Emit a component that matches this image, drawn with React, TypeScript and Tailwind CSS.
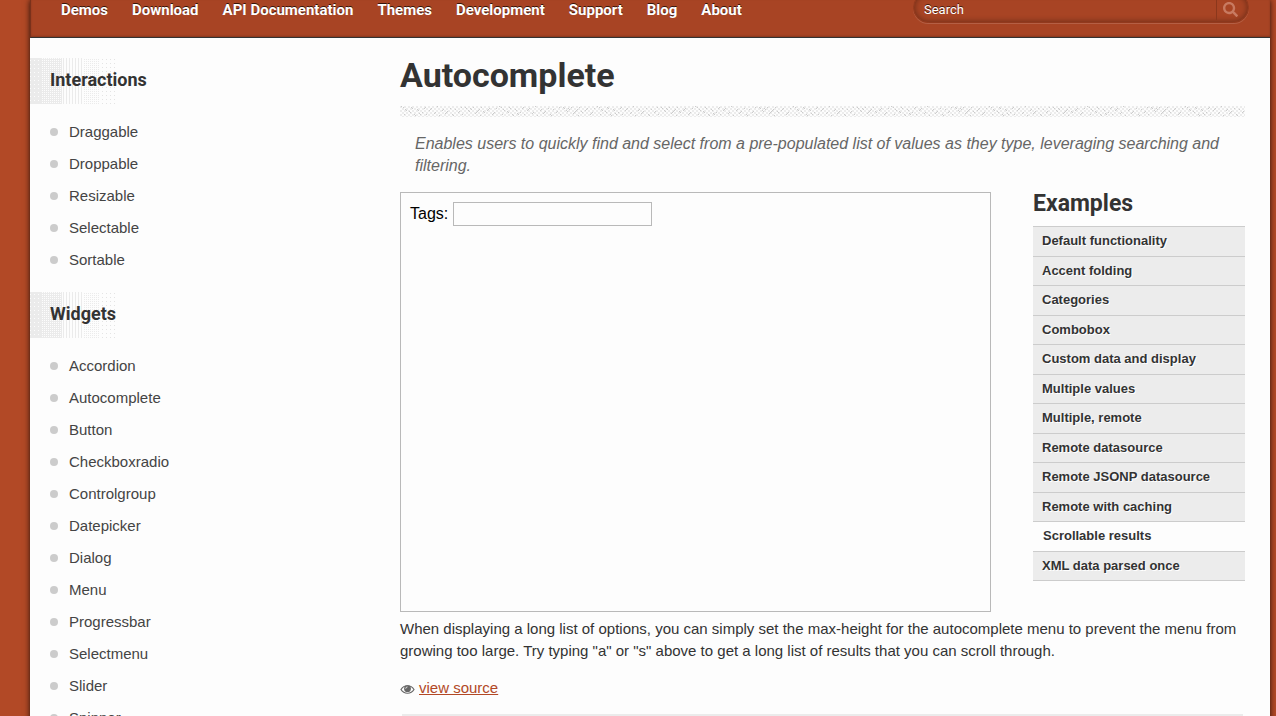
import { useState } from "react";
import { FaSearch } from "react-icons/fa";

const navLinks = ["Demos", "Download", "API Documentation", "Themes", "Development", "Support", "Blog", "About"];

const sections = [
  {
    title: "Interactions",
    items: ["Draggable", "Droppable", "Resizable", "Selectable", "Sortable"],
  },
  {
    title: "Widgets",
    items: [
      "Accordion",
      "Autocomplete",
      "Button",
      "Checkboxradio",
      "Controlgroup",
      "Datepicker",
      "Dialog",
      "Menu",
      "Progressbar",
      "Selectmenu",
      "Slider",
      "Spinner",
    ],
  },
];

const examples = [
  "Default functionality",
  "Accent folding",
  "Categories",
  "Combobox",
  "Custom data and display",
  "Multiple values",
  "Multiple, remote",
  "Remote datasource",
  "Remote JSONP datasource",
  "Remote with caching",
  "Scrollable results",
  "XML data parsed once",
];

function Header() {
  const [query, setQuery] = useState("");

  return (
    <header className="h-[38px] flex items-start justify-between overflow-hidden border-b border-l border-b-[#333] border-l-[#7a311b] bg-[#a84424] pl-[30px] pr-[21px] shadow-[inset_0_-1px_2px_rgba(0,0,0,0.2)]">
      <nav className="flex gap-6 whitespace-nowrap font-['Roboto',sans-serif] text-[15px] leading-5 font-bold text-white [text-shadow:0_-1px_0_rgba(0,0,0,0.7)]">
        {navLinks.map((link) => (
          <a key={link} href="#">
            {link}
          </a>
        ))}
      </nav>
      <form
        onSubmit={(e) => e.preventDefault()}
        className="-mt-2 flex h-[31px] w-[336px] items-center rounded-full border border-[#93391d] shadow-[inset_0_0_6px_rgba(0,0,0,0.4),0_1px_0_rgba(255,255,255,0.15)]"
      >
        <input
          type="text"
          aria-label="Search"
          placeholder="Search"
          value={query}
          onChange={(e) => setQuery(e.target.value)}
          className="h-full min-w-0 flex-1 bg-transparent pt-1 pl-[10px] font-['Roboto',sans-serif] text-[13px] text-white outline-none placeholder:text-white [text-shadow:0_-1px_0_rgba(0,0,0,0.6)]"
        />
        <button type="submit" aria-label="Submit search" className="flex h-6 w-8 items-center border-l border-[#8b371c] pl-[6px] text-[#c87a61]">
          <FaSearch className="mt-1 size-[15px]" />
        </button>
      </form>
    </header>
  );
}

function Sidebar() {
  return (
    <aside className="w-[370px] shrink-0 pt-5">
      {sections.map((section) => (
        <section key={section.title} className="mb-4">
          <h3 className="relative flex h-[46px] items-center pb-[2px] pl-5 font-['Roboto',sans-serif] text-lg font-bold text-[#333]">
            <Halftone />
            <span className="relative">{section.title}</span>
          </h3>
          <ul className="pt-3">
            {section.items.map((item) => (
              <li key={item} className="flex h-8 items-center gap-[11px] pl-5">
                <span className="size-2 rounded-full bg-[#ccc]" />
                <a href="#" className="text-[15px] leading-5 text-[#444]">
                  {item}
                </a>
              </li>
            ))}
          </ul>
        </section>
      ))}
    </aside>
  );
}

// dotted fade behind the sidebar headings
function Halftone() {
  return (
    <svg className="absolute top-0 left-0" width="87" height="46" shapeRendering="crispEdges" aria-hidden="true">
      <defs>
        <pattern id="holes-wide" width="4" height="4" patternUnits="userSpaceOnUse">
          <path d="M0 0h4v4h-4z" fill="#ebebeb" />
          <path d="M0 2h1v1h-1z" fill="#fdfdfd" />
        </pattern>
        <pattern id="holes" width="2" height="2" patternUnits="userSpaceOnUse">
          <path d="M0 0h2v2h-2z" fill="#ebebeb" />
          <path d="M0 0h1v1h-1z" fill="#fdfdfd" />
        </pattern>
        <pattern id="lines" width="3" height="2" patternUnits="userSpaceOnUse">
          <path d="M0 0h1v2h-1z" fill="#ebebeb" />
        </pattern>
        <pattern id="dots" width="2" height="2" patternUnits="userSpaceOnUse">
          <path d="M0 1h1v1h-1z" fill="#ebebeb" />
        </pattern>
        <pattern id="dots-wide" width="4" height="4" patternUnits="userSpaceOnUse">
          <path d="M0 1h1v1h-1z" fill="#e4e4e4" />
        </pattern>
      </defs>
      <rect width="12" height="46" fill="url(#holes-wide)" />
      <rect x="12" width="20" height="46" fill="url(#holes)" />
      <rect x="32" width="22" height="46" fill="url(#lines)" />
      <rect x="54" width="16" height="46" fill="url(#dots)" />
      <rect x="70" width="17" height="46" fill="url(#dots-wide)" />
    </svg>
  );
}

function NoiseBar() {
  return (
    <svg className="block w-full" height="11" shapeRendering="crispEdges" aria-hidden="true">
      <defs>
        <pattern id="checker" width="4" height="4" patternUnits="userSpaceOnUse">
          <path d="M0 0h2v2h-2zM2 2h2v2h-2z" fill="#ececec" />
        </pattern>
        <pattern id="specks" width="98" height="11" patternUnits="userSpaceOnUse">
          <path
            d="M1 0h1v1h-1zM3 1h1v1h-1zM5 3h1v1h-1zM6 4h1v1h-1zM4 8h1v1h-1zM9 5h1v1h-1zM10 6h1v1h-1zM12 2h1v1h-1zM11 1h1v1h-1zM14 8h1v1h-1zM15 9h1v1h-1zM17 3h1v1h-1zM18 4h1v1h-1zM19 7h1v1h-1zM20 8h1v1h-1zM22 6h1v1h-1zM25 1h1v1h-1zM24 2h1v1h-1zM26 8h1v1h-1zM29 4h1v1h-1zM30 3h1v1h-1zM31 2h1v1h-1zM34 7h1v1h-1zM35 6h1v1h-1zM37 0h1v1h-1zM39 9h1v1h-1zM42 4h1v1h-1zM43 3h1v1h-1zM45 7h1v1h-1zM46 6h1v1h-1zM47 5h1v1h-1zM50 2h1v1h-1zM52 8h1v1h-1zM53 9h1v1h-1zM55 3h1v1h-1zM58 6h1v1h-1zM59 5h1v1h-1zM61 1h1v1h-1zM62 8h1v1h-1zM65 1h1v1h-1zM66 2h1v1h-1zM68 4h1v1h-1zM69 5h1v1h-1zM70 2h1v1h-1zM71 3h1v1h-1zM73 1h1v1h-1zM75 7h1v1h-1zM76 6h1v1h-1zM77 5h1v1h-1zM78 4h1v1h-1zM79 3h1v1h-1zM81 1h1v1h-1zM80 9h1v1h-1zM83 5h1v1h-1zM84 6h1v1h-1zM87 4h1v1h-1zM88 3h1v1h-1zM89 2h1v1h-1zM92 8h1v1h-1zM93 7h1v1h-1zM94 6h1v1h-1zM96 2h1v1h-1z"
            fill="#ccc"
          />
        </pattern>
      </defs>
      <rect width="100%" height="11" fill="url(#checker)" />
      <rect width="100%" height="11" fill="url(#specks)" />
    </svg>
  );
}

function Eye() {
  return (
    <svg viewBox="0 0 15 11" className="mr-1 inline h-[11px] w-[15px]" aria-hidden="true">
      <path d="M1 5.5C4 .5 11 .5 14 5.5C11 10.500 4 10.500 1 5.500Z" fill="none" stroke="#666" strokeWidth="1.2" />
      <circle cx="7.500" cy="4.700" r="3.400" fill="#666" />
      <path d="M5.700 4.700A1.800 1.800 0 0 1 7.500 2.900" fill="none" stroke="#fdfdfd" strokeWidth=".8" />
    </svg>
  );
}

function Examples() {
  const [active, setActive] = useState("Scrollable results");

  return (
    <aside className="w-[212px] shrink-0">
      <h2 className="font-['Roboto',sans-serif] text-[23px] leading-6 font-bold text-[#333]">Examples</h2>
      <ul className="mt-[10px] flex h-[355px] flex-col border-t border-[#ccc]">
        {examples.map((example) => (
          <li key={example} className={`flex flex-1 items-center border-b border-[#ccc] ${active === example ? "pl-[10px]" : "bg-[#ececec] pl-[9px]"}`}>
            <a
              href="#"
              onClick={() => setActive(example)}
              className="text-[13px] leading-5 font-bold text-[#333] [text-shadow:1px_1px_0_#fff]"
            >
              {example}
            </a>
          </li>
        ))}
      </ul>
    </aside>
  );
}

export default function App() {
  const [tag, setTag] = useState("");

  return (
    <div className="min-h-screen bg-[#b24926] pr-[6px] pl-[30px] font-['Liberation_Sans',Arial,sans-serif]">
      <div className="bg-[#fdfdfd] shadow-[0_0_6px_rgba(0,0,0,0.8)]">
        <Header />
        <div className="flex">
          <Sidebar />
          <main className="min-w-0 flex-1 pt-[17px] pr-[25px]">
            <h1 className="mb-[11px] font-['Roboto',sans-serif] text-[34px] leading-10 font-bold text-[#333]">Autocomplete</h1>
            <NoiseBar />
            <p className="px-[15px] pt-4 pb-[15px] text-base leading-[22px] text-[#666] italic">
              Enables users to quickly find and select from a pre-populated list of values as they type, leveraging searching and filtering.
            </p>
            <div className="flex items-start gap-[42px]">
              <div className="h-[420px] min-w-0 flex-1 border border-[#b9b9b9] p-[9px] text-base text-black">
                <label htmlFor="tags">Tags: </label>
                <input
                  id="tags"
                  type="text"
                  value={tag}
                  onChange={(e) => setTag(e.target.value)}
                  className="h-6 w-[199px] border border-[#b9b9b9] bg-[#fdfdfd] px-1 outline-none"
                />
              </div>
              <Examples />
            </div>
            <p className="mt-[6px] text-[15px] leading-[22px] text-[#333]">
              When displaying a long list of options, you can simply set the max-height for the autocomplete menu to prevent the menu from growing too
              large. Try typing "a" or "s" above to get a long list of results that you can scroll through.
            </p>
            <a href="#" className="mt-[15px] block w-fit text-[15px] leading-[22px] text-[#b24926] underline">
              <Eye />
              view source
            </a>
            <div className="mx-[2px] mt-[15px] h-5 border-t-2 border-[#ebebeb]" />
          </main>
        </div>
      </div>
    </div>
  );
}
